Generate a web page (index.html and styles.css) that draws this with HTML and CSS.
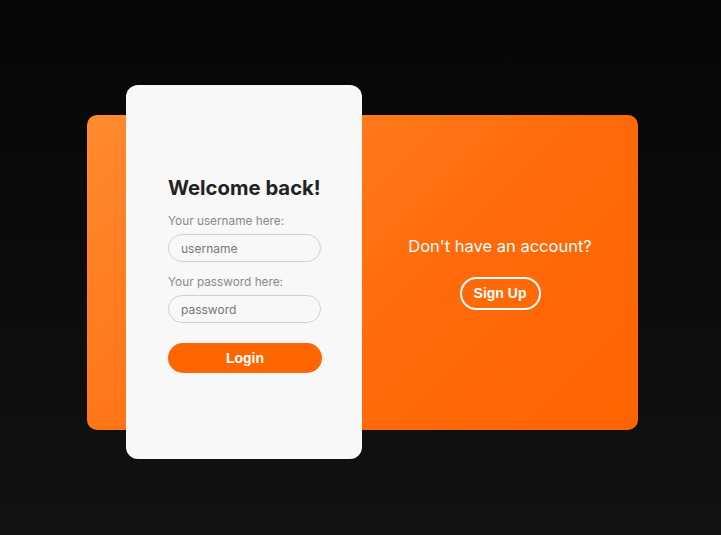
FILE: index.html
```html
<!DOCTYPE html>
<html>
<head>
<meta charset="utf-8">
<link rel="stylesheet" href="styles.css">
</head>
<body>
<div class="stage">
  <div class="panel">
    <div class="spacer"></div>
    <div class="cta">
      <p class="cta-text">Don't have an account?</p>
      <button class="signup">Sign Up</button>
    </div>
    <form class="card">
      <h1 class="title">Welcome back!</h1>
      <label class="label">Your username here:</label>
      <input class="field" type="text" placeholder="username">
      <label class="label">Your password here:</label>
      <input class="field" type="password" placeholder="password">
      <button class="login" type="button">Login</button>
    </form>
  </div>
</div>
</body>
</html>
```
FILE: styles.css
```css
html, body {
  margin: 0;
  height: 100%;
}
body {
  background: linear-gradient(180deg, #060606 0%, #121212 100%);
  font-family: "Inter", "Noto Sans", sans-serif;
}
.stage {
  padding: 115px 0 0 87px;
}
.panel {
  position: relative;
  width: 551px;
  height: 315px;
  border-radius: 10px;
  background: linear-gradient(135deg, #ff8a30 0%, #ff6a0a 60%, #ff6400 100%);
  display: grid;
  grid-template-columns: 275px 1fr;
}
.cta {
  display: flex;
  flex-direction: column;
  align-items: center;
  justify-content: center;
  padding-top: 0;
}
.cta-text {
  margin: 0 0 21px;
  color: #fff;
  font-size: 16.5px;
  font-weight: 400;
}
.signup {
  width: 81px;
  height: 33px;
  border: 2px solid #fff;
  border-radius: 17px;
  background: transparent;
  color: #fff;
  font-family: "Liberation Sans", Arial, sans-serif;
  font-weight: 700;
  font-size: 14px;
}
.card {
  position: absolute;
  left: 39px;
  top: -30px;
  width: 236px;
  height: 374px;
  box-sizing: border-box;
  background: #f8f8f8;
  border-radius: 12px;
  padding: 90px 41px 0 42px;
  display: flex;
  flex-direction: column;
}
.title {
  margin: 0 0 14px;
  font-size: 20.3px;
  font-weight: 700;
  color: #222;
  white-space: nowrap;
}
.label {
  color: #8a8a8a;
  font-size: 11.8px;
  margin-bottom: 6px;
}
.field {
  width: 153px;
  height: 28px;
  box-sizing: border-box;
  border: 1px solid #d0d0d0;
  border-radius: 14px;
  background: #f8f8f8;
  padding: 0 12px;
  font-family: inherit;
  font-size: 12px;
  color: #555;
  margin-bottom: 13px;
  outline: none;
}
.field::placeholder {
  color: #777;
}
.login {
  margin-top: 7px;
  width: 154px;
  height: 30px;
  border: none;
  border-radius: 15px;
  background: #ff6600;
  color: #fff;
  font-family: "Liberation Sans", Arial, sans-serif;
  font-weight: 700;
  font-size: 14px;
}
```
